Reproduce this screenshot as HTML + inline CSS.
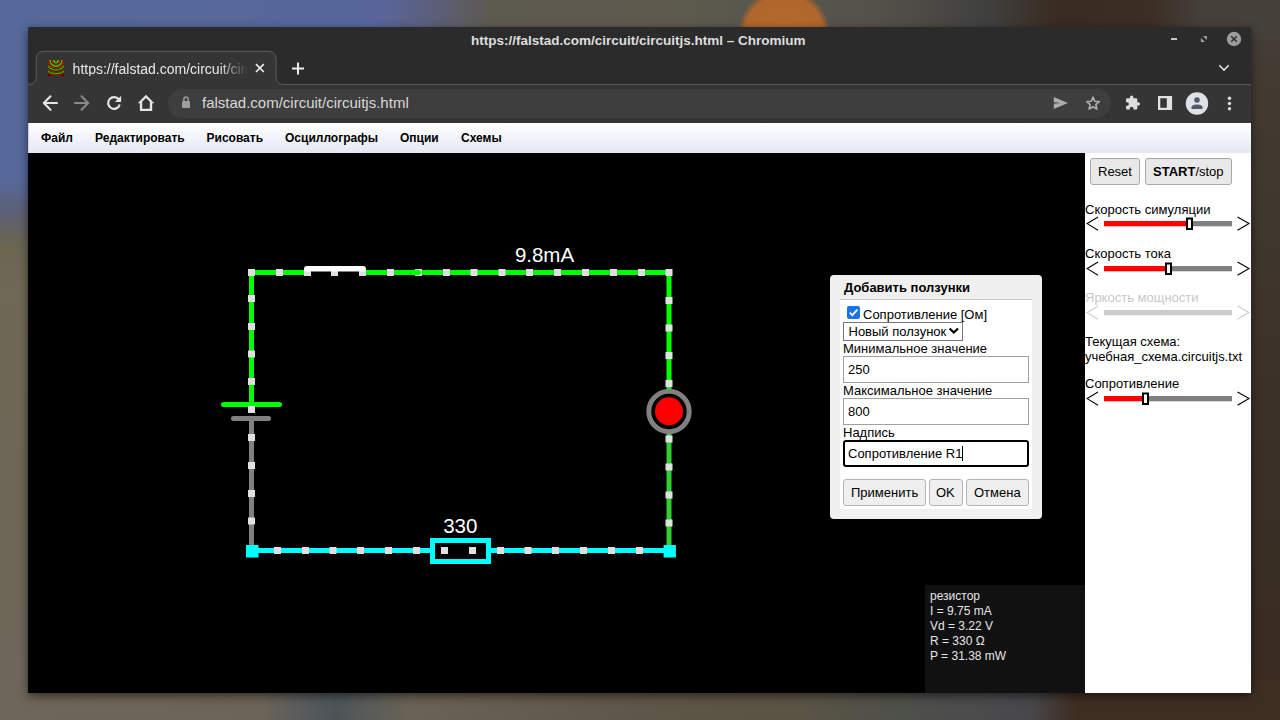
<!DOCTYPE html>
<html><head><meta charset="utf-8">
<style>
html,body{margin:0;padding:0;}
body{width:1280px;height:720px;overflow:hidden;position:relative;font-family:"Liberation Sans",sans-serif;
background:#6e6456;}
.abs{position:absolute;}
#bg{position:absolute;left:0;top:0;width:1280px;height:720px;}
#win{position:absolute;left:28px;top:27px;width:1223px;height:666px;background:#2b2b2b;box-shadow:0 3px 10px rgba(0,0,0,0.55);border-radius:2px 2px 0 0;overflow:hidden;}
.t{position:absolute;white-space:pre;line-height:1;}
#menubar{position:absolute;left:0;top:96px;width:1223px;height:30px;background:linear-gradient(#ffffff,#e3e8f3);}
#menubar span{position:absolute;top:0;font-size:12px;font-weight:bold;color:#000;line-height:30px;}
#canvas{position:absolute;left:0;top:126px;width:1057px;height:540px;background:#000;}
#panel{position:absolute;left:1057px;top:126px;width:166px;height:540px;background:#fff;}
.lbl{position:absolute;font-size:13px;color:#000;white-space:pre;line-height:15px;}
</style></head><body>
<svg id="bg" width="1280" height="720">
<defs>
<linearGradient id="gTop" x1="0" y1="0" x2="1280" y2="0" gradientUnits="userSpaceOnUse">
<stop offset="0.0000" stop-color="#55699a"/><stop offset="0.2969" stop-color="#58669a"/>
<stop offset="0.3359" stop-color="#5c5f7c"/><stop offset="0.3828" stop-color="#5d5a50"/>
<stop offset="0.5000" stop-color="#5e5a4e"/><stop offset="0.5781" stop-color="#5a584c"/>
<stop offset="0.6875" stop-color="#54514a"/><stop offset="0.7734" stop-color="#3f3f3d"/>
<stop offset="0.8281" stop-color="#3a2b20"/><stop offset="0.8984" stop-color="#3b2e24"/>
<stop offset="0.9375" stop-color="#45403a"/><stop offset="1.0000" stop-color="#45403a"/>
</linearGradient>
<linearGradient id="gLeft" x1="0" y1="0" x2="0" y2="720" gradientUnits="userSpaceOnUse">
<stop offset="0.0000" stop-color="#55699a"/><stop offset="0.2500" stop-color="#56689a"/>
<stop offset="0.2986" stop-color="#5e5f72"/><stop offset="0.3403" stop-color="#6a6650"/>
<stop offset="0.4028" stop-color="#706856"/><stop offset="0.6944" stop-color="#6e6757"/><stop offset="1.0000" stop-color="#6e675a"/>
</linearGradient>
<linearGradient id="gBot" x1="0" y1="0" x2="1280" y2="0" gradientUnits="userSpaceOnUse">
<stop offset="0.0000" stop-color="#6e6658"/><stop offset="0.2031" stop-color="#6c6456"/>
<stop offset="0.2344" stop-color="#5a5c5c"/><stop offset="0.2617" stop-color="#4c5458"/>
<stop offset="0.2891" stop-color="#5a5c58"/><stop offset="0.3203" stop-color="#6a6254"/>
<stop offset="0.5000" stop-color="#5e5648"/><stop offset="0.6250" stop-color="#5a5444"/>
<stop offset="0.7031" stop-color="#4e504a"/><stop offset="0.8047" stop-color="#48484c"/>
<stop offset="0.8398" stop-color="#3e2e22"/><stop offset="1.0000" stop-color="#3e2e22"/>
</linearGradient>
<linearGradient id="gRight" x1="0" y1="0" x2="0" y2="720" gradientUnits="userSpaceOnUse">
<stop offset="0.0000" stop-color="#45403a"/><stop offset="0.1111" stop-color="#433b32"/>
<stop offset="0.5556" stop-color="#3b3128"/><stop offset="1.0000" stop-color="#382b21"/>
</linearGradient>
<radialGradient id="gOr" cx="0.5" cy="0.5" r="0.5">
<stop offset="0" stop-color="#b86a2c"/><stop offset="0.85" stop-color="#b0662c"/><stop offset="1" stop-color="#b0662c" stop-opacity="0"/>
</radialGradient>
</defs>
<rect x="0" y="0" width="1280" height="720" fill="#6a5e50"/>
<rect x="0" y="0" width="60" height="720" fill="url(#gLeft)"/>
<rect x="1220" y="0" width="60" height="720" fill="url(#gRight)"/>
<rect x="0" y="0" width="1280" height="40" fill="url(#gTop)"/>
<rect x="0" y="680" width="1280" height="40" fill="url(#gBot)"/>
<circle cx="784" cy="34" r="46" fill="url(#gOr)"/>
</svg>

<div id="win">
<!-- tab strip -->
<svg class="abs" style="left:0;top:0" width="1223" height="96">
<path d="M0,57.5 Q8.25,57.5 8.25,49.5 L8.25,32.25 Q8.25,24.25 16.25,24.25 L240,24.25 Q248,24.25 248,32.25 L248,49.5 Q248,57.5 256,57.5 L1223,57.5 L1223,96 L0,96 Z" fill="#353535"/>
<path d="M0,57.5 Q8.25,57.5 8.25,49.5 L8.25,32.25 Q8.25,24.25 16.25,24.25 L240,24.25 Q248,24.25 248,32.25 L248,49.5 Q248,57.5 256,57.5 L1223,57.5" fill="none" stroke="#5c5c5c" stroke-width="1"/>
</svg>

<!-- title -->
<div class="t" style="left:443px;top:7px;font-size:13.5px;font-weight:bold;color:#dedede;">https://falstad.com/circuit/circuitjs.html – Chromium</div>
<!-- window controls -->
<svg class="abs" style="left:1130px;top:0" width="93" height="57">
<rect x="13" y="11" width="6" height="2" fill="#c8c8c8"/>
<path d="M44.9,9 L49,9 L49,12.9 Z" fill="#a0a0a0"/><path d="M42.9,10.9 L42.9,15 L47,15 Z" fill="#a0a0a0"/>
<circle cx="76" cy="12" r="7.2" fill="#9c9c9c"/>
<path d="M73.2,9.2 L78.8,14.8 M78.8,9.2 L73.2,14.8" stroke="#2a2a2a" stroke-width="1.4"/>
<path d="M61.3,38.3 L66,43 L70.7,38.3" fill="none" stroke="#e2e2e2" stroke-width="1.6"/>
</svg>
<!-- favicon -->
<svg class="abs" style="left:20px;top:33px" width="16" height="16">
<defs><clipPath id="fc"><rect x="0" y="0" width="16" height="16"/></clipPath></defs>
<g clip-path="url(#fc)">
<rect x="0" y="0" width="16" height="16" fill="#3a0000"/>
<circle cx="8" cy="0.5" r="0.8" fill="#d00000"/>
<circle cx="8" cy="0.5" r="2.1" fill="none" stroke="#00e000" stroke-width="1.6"/>
<circle cx="8" cy="0.5" r="4" fill="none" stroke="#e00000" stroke-width="1.6"/>
<circle cx="8" cy="0.5" r="5.9" fill="none" stroke="#00d000" stroke-width="1.6"/>
<circle cx="8" cy="0.5" r="7.7" fill="none" stroke="#d00000" stroke-width="1.6"/>
<circle cx="8" cy="0.5" r="9.7" fill="none" stroke="#00c000" stroke-width="1.6"/>
<circle cx="8" cy="0.5" r="11.8" fill="none" stroke="#c00000" stroke-width="1.6"/>
<circle cx="8" cy="0.5" r="13.5" fill="none" stroke="#00b000" stroke-width="1.6"/>
<circle cx="8" cy="0.5" r="15.2" fill="none" stroke="#a00000" stroke-width="1.6"/>
</g>
</svg>
<!-- tab title -->
<div class="t" style="left:44.6px;top:35px;width:175px;overflow:hidden;font-size:14px;color:#e8e8e8;-webkit-mask-image:linear-gradient(90deg,#000 146px,transparent 175px);">https://falstad.com/circuit/circuitjs.html</div>
<svg class="abs" style="left:220px;top:33px" width="100" height="20">
<path d="M8,4.2 L15.8,12 M15.8,4.2 L8,12" stroke="#ececec" stroke-width="1.7"/>
<path d="M50,2.5 L50,14.5 M44,8.5 L56,8.5" stroke="#ececec" stroke-width="2"/>
</svg>
<!-- toolbar -->
<div class="abs" style="left:140px;top:62px;width:943px;height:29px;border-radius:14.5px;background:#3e3e3e;"></div>
<svg class="abs" style="left:0;top:58px" width="1223" height="38">
<!-- back -->
<path d="M16,18 L29,18 M22.5,11.3 L15.8,18 L22.5,24.7" fill="none" stroke="#e6e6e6" stroke-width="2.1" stroke-linejoin="round" stroke-linecap="round"/>
<!-- forward -->
<path d="M47,18 L60,18 M53.5,11.3 L60.2,18 L53.5,24.7" fill="none" stroke="#8a8a8a" stroke-width="2.1" stroke-linejoin="round" stroke-linecap="round"/>
<!-- reload -->
<path d="M91.65,19.51 A5.85,5.85 0 1 1 90.79,14.64" fill="none" stroke="#e6e6e6" stroke-width="2.2"/>
<path d="M93.1,10.8 L93.1,16.9 L87,16.9 Z" fill="#e6e6e6"/>
<!-- home -->
<path fill-rule="evenodd" d="M118,9.8 L126.3,18.2 L124.2,18.2 L124.2,26 L111.9,26 L111.9,18.2 L109.7,18.2 Z M118,12.9 L121.8,16.7 L121.8,23.7 L114.2,23.7 L114.2,16.7 Z" fill="#e6e6e6"/>
<!-- lock -->
<rect x="154" y="16" width="8" height="7" rx="1" fill="#9e9e9e"/>
<path d="M155.9,16.5 L155.9,14.2 A2.1,2.1 0 0 1 160.1,14.2 L160.1,16.5" fill="none" stroke="#9e9e9e" stroke-width="1.5"/>
<!-- send -->
<path d="M1025.8,11.9 L1039.9,18 L1025.8,24.1 L1025.8,18.8 L1033,18 L1025.8,17.2 Z" fill="#adadad"/>
<!-- star -->
<path d="M1065.00,12.10 L1066.76,16.27 L1071.28,16.66 L1067.85,19.63 L1068.88,24.04 L1065.00,21.70 L1061.12,24.04 L1062.15,19.63 L1058.72,16.66 L1063.24,16.27 Z" fill="none" stroke="#adadad" stroke-width="1.6" stroke-linejoin="round"/>
<!-- puzzle -->
<g transform="translate(1096.67,9.93) scale(0.6667)"><path d="M20.5 11H19V7c0-1.1-.9-2-2-2h-4V3.5C13 2.12 11.88 1 10.5 1S8 2.12 8 3.5V5H4c-1.1 0-1.99.9-1.99 2v3.8H3.5c1.49 0 2.7 1.21 2.7 2.7s-1.210 2.7-2.7 2.7H2V20c0 1.1.9 2 2 2h3.8v-1.5c0-1.49 1.21-2.7 2.7-2.7 1.49 0 2.7 1.21 2.7 2.7V22H17c1.1 0 2-.9 2-2v-4h1.5c1.38 0 2.5-1.12 2.5-2.5S21.88 11 20.5 11z" fill="#dcdcdc"/></g>
<!-- side panel -->
<path fill-rule="evenodd" d="M1130,11 L1144.1,11 L1144.1,25.1 L1130,25.1 Z M1132.3,13.2 L1138.8,13.2 L1138.8,22.8 L1132.3,22.8 Z" fill="#e0e0e0"/>
<!-- avatar -->
<circle cx="1169" cy="18.5" r="11.2" fill="#dfe1e5"/>
<circle cx="1169" cy="15" r="2.8" fill="#4d5a6e"/>
<path d="M1163.5,24 L1163.5,22.5 Q1163.5,19.5 1169,19.5 Q1174.5,19.5 1174.5,22.5 L1174.5,24 Z" fill="#4d5a6e"/>
<!-- dots -->
<circle cx="1201.5" cy="13.3" r="1.7" fill="#dedede"/>
<circle cx="1201.5" cy="18.5" r="1.7" fill="#dedede"/>
<circle cx="1201.5" cy="23.7" r="1.7" fill="#dedede"/>
</svg>
<div class="t" style="left:174px;top:68px;font-size:15px;color:#d8d8d8;">falstad.com/circuit/circuitjs.html</div>
<!-- menubar -->
<div id="menubar">
<div class="abs" style="left:0;top:0;width:1px;height:30px;background:#cfcfcf"></div>
<span style="left:13px">Файл</span>
<span style="left:67px">Редактировать</span>
<span style="left:178.5px">Рисовать</span>
<span style="left:257px">Осциллографы</span>
<span style="left:372px">Опции</span>
<span style="left:433px">Схемы</span>
</div>
<div id="canvas"></div>
<div id="panel"></div>
</div>

<svg class="abs" style="left:0;top:0" width="1280" height="720">
<g fill="none" stroke-width="5">
<path d="M251.5,272.5 L304,272.5 M366,272.5 L669,272.5" stroke="#00ff00"/>
<path d="M251.5,270 L251.5,404.5" stroke="#00ff00"/>
<path d="M223.5,404.5 L279.5,404.5" stroke="#00ff00" stroke-linecap="round"/>
<path d="M233.5,418.5 L268.5,418.5" stroke="#808080" stroke-linecap="round"/>
<path d="M251.5,418.5 L251.5,550" stroke="#808080"/>
<path d="M669,270 L669,390" stroke="#00ff00"/>
<path d="M669,433 L669,550" stroke="#33cc33"/>
<path d="M251.5,550.5 L432,550.5 M489,550.5 L669,550.5" stroke="#00ffff"/>
<rect x="432.5" y="540.5" width="56" height="21" stroke="#00ffff"/>
<circle cx="669" cy="411.5" r="20.2" stroke="#808080"/>
</g>
<circle cx="669" cy="411.3" r="14" fill="#ff0000"/>
<rect x="246" y="545" width="12.5" height="12.5" fill="#00ffff"/>
<rect x="663.6" y="545" width="12.3" height="12.5" fill="#00ffff"/>
<g fill="#e0e0e0"><rect x="248" y="269" width="7" height="7"/><rect x="276" y="269" width="7" height="7"/><rect x="304" y="269" width="7" height="7"/><rect x="331" y="269" width="7" height="7"/><rect x="359" y="269" width="7" height="7"/><rect x="387" y="269" width="7" height="7"/><rect x="415" y="269" width="7" height="7"/><rect x="443" y="269" width="7" height="7"/><rect x="470.5" y="269" width="7" height="7"/><rect x="498.5" y="269" width="7" height="7"/><rect x="526" y="269" width="7" height="7"/><rect x="554" y="269" width="7" height="7"/><rect x="582" y="269" width="7" height="7"/><rect x="610" y="269" width="7" height="7"/><rect x="638" y="269" width="7" height="7"/><rect x="665.5" y="269" width="7" height="7"/><rect x="248" y="295" width="7" height="7"/><rect x="248" y="323" width="7" height="7"/><rect x="248" y="350.5" width="7" height="7"/><rect x="248" y="378" width="7" height="7"/><rect x="248" y="406" width="7" height="7"/><rect x="248" y="434" width="7" height="7"/><rect x="248" y="462" width="7" height="7"/><rect x="248" y="490" width="7" height="7"/><rect x="248" y="517.5" width="7" height="7"/><rect x="665.5" y="297" width="7" height="7"/><rect x="665.5" y="324.5" width="7" height="7"/><rect x="665.5" y="352" width="7" height="7"/><rect x="665.5" y="380" width="7" height="7"/><rect x="665.5" y="435.5" width="7" height="7"/><rect x="665.5" y="463.5" width="7" height="7"/><rect x="665.5" y="491.5" width="7" height="7"/><rect x="665.5" y="519.5" width="7" height="7"/><rect x="274" y="547" width="7" height="7"/><rect x="302" y="547" width="7" height="7"/><rect x="329.5" y="547" width="7" height="7"/><rect x="357" y="547" width="7" height="7"/><rect x="385" y="547" width="7" height="7"/><rect x="413" y="547" width="7" height="7"/><rect x="441" y="547" width="7" height="7"/><rect x="469" y="547" width="7" height="7"/><rect x="497" y="547" width="7" height="7"/><rect x="524.5" y="547" width="7" height="7"/><rect x="552" y="547" width="7" height="7"/><rect x="580" y="547" width="7" height="7"/><rect x="608" y="547" width="7" height="7"/><rect x="636" y="547" width="7" height="7"/></g>
<path d="M413,272.5 L418.2,272.5" stroke="#00ff00" stroke-width="5.3" stroke-linecap="round"/>
<path d="M304,271.5 L304,269 Q304,266 307,266 L363,266 Q366,266 366,269 L366,271.5 Z" fill="#ffffff"/>
<text x="544.5" y="262" font-family="Liberation Sans" font-size="20.5" fill="#ffffff" text-anchor="middle">9.8mA</text>
<text x="460.3" y="533" font-family="Liberation Sans" font-size="20.5" fill="#ffffff" text-anchor="middle">330</text>
</svg>
<!-- info box -->
<div class="abs" style="left:925px;top:585px;width:160px;height:108px;background:#111111;"></div>
<div class="abs" style="left:930px;top:589px;font-size:12px;line-height:15px;color:#e6e6e6;white-space:pre">резистор
I = 9.75 mA
Vd = 3.22 V
R = 330 Ω
P = 31.38 mW</div>

<!-- right panel -->
<div class="abs" style="left:1090px;top:158px;width:48px;height:25px;border:1px solid #a8a8a8;border-radius:3px;background:#e9e9e9;"></div>
<div class="abs" style="left:1145px;top:158px;width:85px;height:25px;border:1px solid #a8a8a8;border-radius:3px;background:#e9e9e9;"></div>
<div class="t" style="left:1098px;top:165px;font-size:13px;color:#000">Reset</div>
<div class="t" style="left:1153px;top:165px;font-size:13px;color:#000"><b>START</b>/stop</div>
<div class="t" style="left:1085px;top:203px;font-size:13px;color:#000">Скорость симуляции</div>
<svg class="abs" style="left:1085px;top:216.25px" width="166" height="16"><path d="M13,1.0 L2.2,7.6 L13,14.2" fill="none" stroke="#000" stroke-width="1.1"/><path d="M152.5,1.0 L164,7.6 L152.5,14.2" fill="none" stroke="#000" stroke-width="1.1"/><rect x="19" y="5" width="82" height="5.3" fill="#ff0000"/><rect x="101" y="5" width="46" height="5.3" fill="#808080"/><rect x="102" y="2.5" width="5" height="10.5" fill="#fff" stroke="#000" stroke-width="2"/></svg>
<div class="t" style="left:1085px;top:247px;font-size:13px;color:#000">Скорость тока</div>
<svg class="abs" style="left:1085px;top:260.5px" width="166" height="16"><path d="M13,1.0 L2.2,7.6 L13,14.2" fill="none" stroke="#000" stroke-width="1.1"/><path d="M152.5,1.0 L164,7.6 L152.5,14.2" fill="none" stroke="#000" stroke-width="1.1"/><rect x="19" y="5" width="61" height="5.3" fill="#ff0000"/><rect x="80" y="5" width="67" height="5.3" fill="#808080"/><rect x="81" y="2.5" width="5" height="10.5" fill="#fff" stroke="#000" stroke-width="2"/></svg>
<div class="t" style="left:1085px;top:291px;font-size:13px;color:#c8c8c8">Яркость мощности</div>
<svg class="abs" style="left:1085px;top:304.7px" width="166" height="16"><path d="M13,1.0 L2.2,7.6 L13,14.2" fill="none" stroke="#cccccc" stroke-width="1.1"/><path d="M152.5,1.0 L164,7.6 L152.5,14.2" fill="none" stroke="#cccccc" stroke-width="1.1"/><rect x="19" y="5" width="128" height="5.3" fill="#cccccc"/></svg>
<div class="t" style="left:1085px;top:335px;font-size:13px;color:#000;line-height:14.5px">Текущая схема:
учебная_схема.circuitjs.txt</div>
<div class="t" style="left:1085px;top:377px;font-size:13px;color:#000">Сопротивление</div>
<svg class="abs" style="left:1085px;top:390.7px" width="166" height="16"><path d="M13,1.0 L2.2,7.6 L13,14.2" fill="none" stroke="#000" stroke-width="1.1"/><path d="M152.5,1.0 L164,7.6 L152.5,14.2" fill="none" stroke="#000" stroke-width="1.1"/><rect x="19" y="5" width="38" height="5.3" fill="#ff0000"/><rect x="57" y="5" width="90" height="5.3" fill="#808080"/><rect x="58" y="2.5" width="5" height="10.5" fill="#fff" stroke="#000" stroke-width="2"/></svg>

<!-- dialog -->
<div class="abs" style="left:830px;top:275px;width:212px;height:244px;background:#f0f0f0;border-radius:4px;"></div>
<div class="t" style="left:844px;top:281px;font-size:13px;font-weight:bold;color:#000">Добавить ползунки</div>
<div class="abs" style="left:840px;top:299px;width:192px;height:1px;background:#c6c6c6;"></div>
<div class="abs" style="left:840px;top:300px;width:192px;height:209px;background:#fff;"></div>
<svg class="abs" style="left:847px;top:306px" width="13" height="13"><rect x="0" y="0" width="13" height="13" rx="2" fill="#1a73e8"/><path d="M2.8,6.6 L5.3,9.1 L10.4,3.6" fill="none" stroke="#fff" stroke-width="1.8"/></svg>
<div class="t" style="left:863px;top:308px;font-size:13px;color:#000">Сопротивление [Ом]</div>
<div class="abs" style="left:843px;top:322px;width:118px;height:17px;border:1px solid #767676;background:#fff;"></div>
<div class="t" style="left:848.5px;top:324.5px;font-size:13px;color:#000">Новый ползунок</div>
<svg class="abs" style="left:948px;top:326px" width="12" height="10"><path d="M1.6,2.4 L5.8,6.6 L10,2.4" fill="none" stroke="#000" stroke-width="2.1"/></svg>
<div class="t" style="left:843px;top:341.5px;font-size:13px;color:#000">Минимальное значение</div>
<div class="abs" style="left:843px;top:356px;width:184px;height:25px;border:1px solid #a0a0a0;background:#fff;"></div>
<div class="t" style="left:848px;top:363px;font-size:13px;color:#000">250</div>
<div class="t" style="left:843px;top:384px;font-size:13px;color:#000">Максимальное значение</div>
<div class="abs" style="left:843px;top:398px;width:184px;height:25px;border:1px solid #a0a0a0;background:#fff;"></div>
<div class="t" style="left:848px;top:405px;font-size:13px;color:#000">800</div>
<div class="t" style="left:843px;top:426px;font-size:13px;color:#000">Надпись</div>
<div class="abs" style="left:843px;top:440px;width:182px;height:23px;border:2px solid #000;border-radius:3px;background:#fff;"></div>
<div class="t" style="left:848px;top:447px;font-size:13px;color:#000">Сопротивление R1</div>
<div class="abs" style="left:962px;top:446px;width:1px;height:15px;background:#000;"></div>
<div class="abs" style="left:843px;top:479px;width:81px;height:25px;border:1px solid #b4b4b4;border-radius:3px;background:#efefef;"></div>
<div class="abs" style="left:929px;top:479px;width:32px;height:25px;border:1px solid #b4b4b4;border-radius:3px;background:#efefef;"></div>
<div class="abs" style="left:966px;top:479px;width:61px;height:25px;border:1px solid #b4b4b4;border-radius:3px;background:#efefef;"></div>
<div class="t" style="left:851px;top:486px;font-size:13px;color:#000">Применить</div>
<div class="t" style="left:936px;top:486px;font-size:13px;color:#000">OK</div>
<div class="t" style="left:974px;top:486px;font-size:13px;color:#000">Отмена</div>
</body></html>
